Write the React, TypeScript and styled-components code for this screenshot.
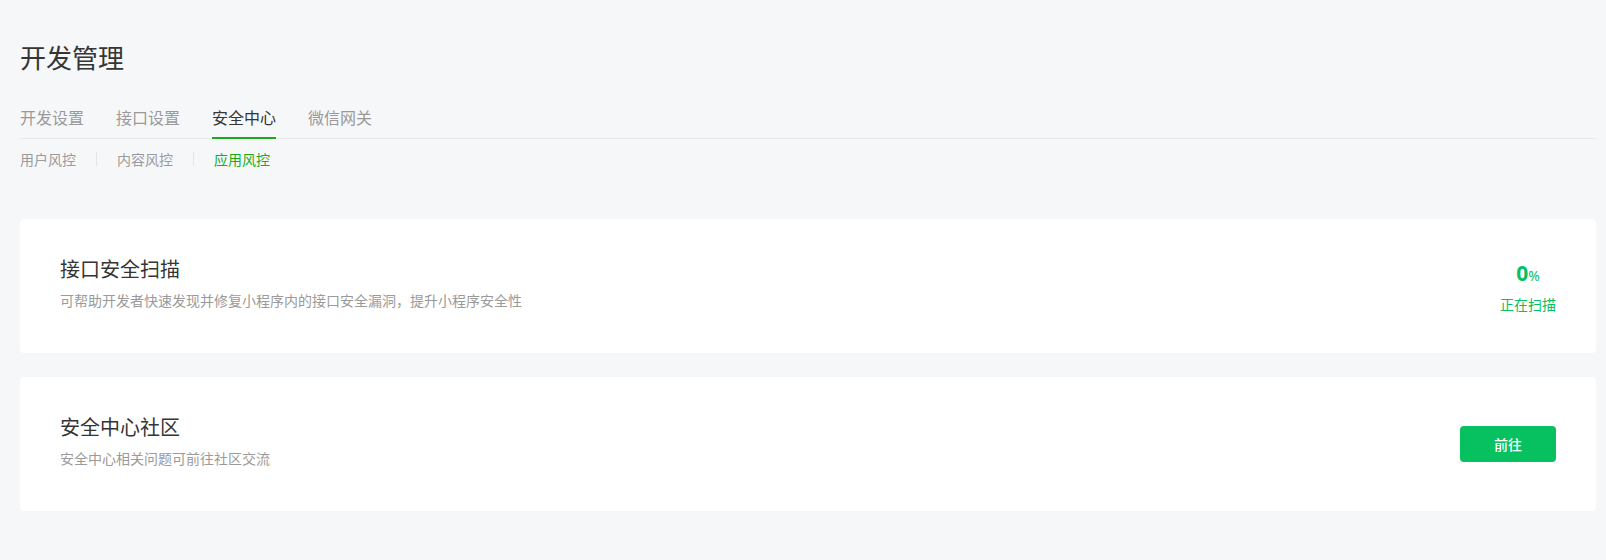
import React from "react";
import styled, { createGlobalStyle } from "styled-components";

const GlobalStyle = createGlobalStyle`
  html, body {
    margin: 0;
    padding: 0;
    background: #f6f7f9;
    font-family: "Noto Sans", "Noto Sans CJK SC", sans-serif;
    color: #353535;
  }
  * { box-sizing: border-box; }
`;

const Page = styled.div`
  padding: 39px 10px 40px 20px;
  min-height: 560px;
`;

const Title = styled.h1`
  margin: 0 0 30px;
  font-size: 26px;
  line-height: 36px;
  font-weight: 400;
  color: #353535;
  font-family: "Noto Sans CJK SC", sans-serif;
`;

const TabNav = styled.div`
  display: flex;
  gap: 32px;
  border-bottom: 1px solid #e7e7eb;
`;

const Tab = styled.div<{ $active?: boolean }>`
  font-family: "Noto Sans CJK SC", sans-serif;
  font-size: 16px;
  line-height: 24px;
  padding-bottom: 8px;
  margin-bottom: -1px;
  color: ${(p) => (p.$active ? "#353535" : "#9a9a9a")};
  border-bottom: 2px solid ${(p) => (p.$active ? "#1aad19" : "transparent")};
`;

const SubNav = styled.div`
  display: flex;
  align-items: center;
  margin-top: 10px;
`;

const SubTab = styled.div<{ $active?: boolean }>`
  font-family: "Noto Sans CJK SC", sans-serif;
  font-size: 14px;
  line-height: 20px;
  color: ${(p) => (p.$active ? "#1aad19" : "#9a9a9a")};
`;

const Divider = styled.span`
  width: 1px;
  height: 14px;
  background: #e4e4e4;
  margin: 0 20px;
`;

const Cards = styled.div`
  display: flex;
  flex-direction: column;
  gap: 24px;
  margin-top: 50px;
`;

const Card = styled.div`
  background: #fff;
  border-radius: 4px;
  height: 134px;
  padding: 36px 40px 0 40px;
  display: flex;
  justify-content: space-between;
  align-items: flex-start;
`;

const Info = styled.div`
  display: flex;
  flex-direction: column;
  gap: 7px;
`;

const CardTitle = styled.div`
  font-family: "Noto Sans CJK SC", sans-serif;
  font-size: 20px;
  line-height: 28px;
  color: #353535;
`;

const CardDesc = styled.div`
  font-family: "Noto Sans CJK SC", sans-serif;
  font-size: 14px;
  line-height: 20px;
  color: #9a9a9a;
`;

const Status = styled.div`
  align-self: center;
  margin-top: -36px;
  display: flex;
  flex-direction: column;
  align-items: center;
  gap: 4px;
  color: #07c160;
`;

const Percent = styled.div`
  font-family: "Noto Sans", sans-serif;
  font-weight: 700;
  font-size: 21px;
  line-height: 28px;
`;

const PercentSign = styled.span`
  font-weight: 400;
  font-size: 14px;
`;

const StatusLabel = styled.div`
  font-family: "Noto Sans CJK SC", sans-serif;
  font-size: 14px;
  line-height: 20px;
`;

const Button = styled.button`
  align-self: center;
  margin-top: -36px;
  width: 96px;
  height: 36px;
  border: none;
  border-radius: 4px;
  background: #07c160;
  color: #fff;
  font-family: "Noto Sans CJK SC", sans-serif;
  font-size: 14px;
  font-weight: 500;
  cursor: pointer;
`;

export default function App() {
  const tabs = ["开发设置", "接口设置", "安全中心", "微信网关"];
  const subs = ["用户风控", "内容风控", "应用风控"];
  return (
    <>
      <GlobalStyle />
      <Page>
        <Title>开发管理</Title>
        <TabNav>
          {tabs.map((t) => (
            <Tab key={t} $active={t === "安全中心"}>
              {t}
            </Tab>
          ))}
        </TabNav>
        <SubNav>
          {subs.map((s, i) => (
            <React.Fragment key={s}>
              {i > 0 && <Divider />}
              <SubTab $active={s === "应用风控"}>{s}</SubTab>
            </React.Fragment>
          ))}
        </SubNav>
        <Cards>
          <Card>
            <Info>
              <CardTitle>接口安全扫描</CardTitle>
              <CardDesc>可帮助开发者快速发现并修复小程序内的接口安全漏洞，提升小程序安全性</CardDesc>
            </Info>
            <Status>
              <Percent>
                0<PercentSign>%</PercentSign>
              </Percent>
              <StatusLabel>正在扫描</StatusLabel>
            </Status>
          </Card>
          <Card>
            <Info>
              <CardTitle>安全中心社区</CardTitle>
              <CardDesc>安全中心相关问题可前往社区交流</CardDesc>
            </Info>
            <Button>前往</Button>
          </Card>
        </Cards>
      </Page>
    </>
  );
}
